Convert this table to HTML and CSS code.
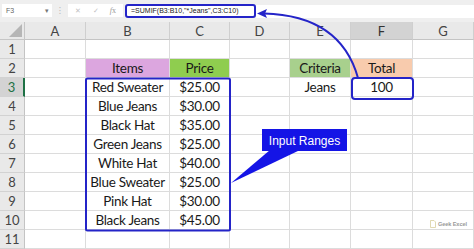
FILE: index.html
```html
<!DOCTYPE html>
<html>
<head>
<meta charset="utf-8">
<link rel="stylesheet" href="styles.css">
</head>
<body>
<div class="page">
  <div class="fbar">
    <div class="namebox"><span class="nb-text">F3</span><span class="nb-arrow">▾</span></div>
    <div class="sep">⁝</div>
    <div class="btns"><span class="b-x">✕</span><span class="b-ok">✓</span><span class="b-fx"><i>f</i>x</span></div>
    <div class="formula">=SUMIF(B3:B10,"*Jeans",C3:C10)</div>
    <div class="frest"></div>
  </div>
  <div class="sheet">
    <div class="corner"><span class="tri"></span></div>
    <div class="ch">A</div><div class="ch">B</div><div class="ch">C</div><div class="ch">D</div><div class="ch">E</div><div class="ch sel">F</div><div class="ch">G</div>

    <div class="rh">1</div><div class="c"></div><div class="c"></div><div class="c"></div><div class="c"></div><div class="c"></div><div class="c"></div><div class="c"></div>
    <div class="rh">2</div><div class="c"></div><div class="c items">Items</div><div class="c price">Price</div><div class="c"></div><div class="c crit">Criteria</div><div class="c total">Total</div><div class="c"></div>
    <div class="rh sel">3</div><div class="c"></div><div class="c">Red Sweater</div><div class="c">$25.00</div><div class="c"></div><div class="c">Jeans</div><div class="c">100</div><div class="c"></div>
    <div class="rh">4</div><div class="c"></div><div class="c">Blue Jeans</div><div class="c">$30.00</div><div class="c"></div><div class="c"></div><div class="c"></div><div class="c"></div>
    <div class="rh">5</div><div class="c"></div><div class="c">Black Hat</div><div class="c">$35.00</div><div class="c"></div><div class="c"></div><div class="c"></div><div class="c"></div>
    <div class="rh">6</div><div class="c"></div><div class="c">Green Jeans</div><div class="c">$25.00</div><div class="c"></div><div class="c"></div><div class="c"></div><div class="c"></div>
    <div class="rh">7</div><div class="c"></div><div class="c">White Hat</div><div class="c">$40.00</div><div class="c"></div><div class="c"></div><div class="c"></div><div class="c"></div>
    <div class="rh">8</div><div class="c"></div><div class="c">Blue Sweater</div><div class="c">$25.00</div><div class="c"></div><div class="c"></div><div class="c"></div><div class="c"></div>
    <div class="rh">9</div><div class="c"></div><div class="c">Pink Hat</div><div class="c">$30.00</div><div class="c"></div><div class="c"></div><div class="c"></div><div class="c"></div>
    <div class="rh">10</div><div class="c"></div><div class="c">Black Jeans</div><div class="c">$45.00</div><div class="c"></div><div class="c"></div><div class="c"></div><div class="c"></div>
    <div class="rh">11</div><div class="c"></div><div class="c"></div><div class="c"></div><div class="c"></div><div class="c"></div><div class="c"></div><div class="c"></div>
  </div>

  <svg class="overlay" width="474" height="249" viewBox="0 0 474 249">
    <rect x="86" y="78.5" width="144" height="152" rx="1.5" fill="none" stroke="#2424c8" stroke-width="2"/>
    <rect x="352" y="78" width="61" height="21" rx="3" fill="none" stroke="#2424c8" stroke-width="2"/>
    <path d="M358 78 C 348 42, 322 15, 264 13.5" fill="none" stroke="#2424c8" stroke-width="2"/>
    <polygon points="257,13.5 267,9 265,13.5 267,18" fill="#2424c8"/>
    <polygon points="270,150 300,150 231,183" fill="#1414e6"/>
    <rect x="262" y="129" width="85" height="22" fill="#1414e6"/>
    <text x="304.5" y="144.5" text-anchor="middle" class="callout-text">Input Ranges</text>
  </svg>

  <div class="wm">
    <svg class="wm-icon" width="6" height="8" viewBox="0 0 6 8"><path d="M0.5 0.5 H4 L5.5 2 V7.5 H0.5 Z" fill="#fff" stroke="#d8cfa0" stroke-width="0.8"/></svg>
    <span>Geek Excel</span>
  </div>
</div>
</body>
</html>
```

FILE: styles.css
```css
* { box-sizing: border-box; }
html, body { margin: 0; padding: 0; background: #fff; }
.page {
  position: relative;
  width: 474px;
  height: 249px;
  overflow: hidden;
  font-family: Lato, "Noto Sans", sans-serif;
}
.fbar {
  height: 22px;
  background: #efefef;
  display: flex;
  align-items: flex-start;
  padding-top: 4px;
}
.namebox {
  margin-left: 2px;
  width: 50px;
  height: 13px;
  background: #fff;
  display: flex;
  align-items: center;
  justify-content: space-between;
  padding: 0 3px 0 4px;
  font-family: "Liberation Sans", sans-serif;
  font-size: 7px;
  color: #666;
}
.nb-arrow { font-size: 7px; color: #777; }
.sep {
  width: 16px;
  height: 13px;
  text-align: center;
  font-size: 9px;
  line-height: 13px;
  color: #b5b5b5;
}
.btns {
  width: 55px;
  height: 13px;
  background: #fff;
  display: flex;
  align-items: center;
  font-family: "DejaVu Sans", sans-serif;
  font-size: 7px;
  color: #c2c2c2;
}
.b-x { margin-left: 7px; }
.b-ok { margin-left: 12px; }
.b-fx { margin-left: 11px; font-family: "Liberation Serif", serif; font-size: 8px; color: #9a9a9a; }
.formula {
  margin-left: 2px;
  width: 131px;
  height: 14px;
  border: 2px solid #2424c8;
  border-radius: 3px;
  background: #fff;
  padding-left: 4px;
  font-family: "Liberation Sans", sans-serif;
  font-size: 7px;
  line-height: 10px;
  color: #222;
  white-space: nowrap;
}
.frest {
  flex: 1;
  height: 13px;
  margin-top: 1px;
  background: #fff;
}
.sheet {
  display: grid;
  grid-template-columns: 25px 61px 84px 60px 60px 61px 62px 61px;
  grid-template-rows: 18px repeat(11, 19px);
}
.corner {
  background: #e9e9e9;
  border-right: 1px solid #c6c6c6;
  border-bottom: 1px solid #c6c6c6;
  position: relative;
}
.tri {
  position: absolute;
  right: 2px;
  bottom: 2px;
  width: 0;
  height: 0;
  border-left: 13px solid transparent;
  border-bottom: 13px solid #b6b6b6;
}
.ch {
  background: #e9e9e9;
  border-right: 1px solid #cfcfcf;
  border-bottom: 1px solid #c4c4c4;
  display: flex;
  align-items: center;
  justify-content: center;
  font-size: 13px;
  color: #444;
}
.ch.sel { background: #d3d3d3; color: #333; }
.rh {
  background: #e9e9e9;
  border-right: 1px solid #c4c4c4;
  border-bottom: 1px solid #d2d2d2;
  display: flex;
  align-items: center;
  justify-content: center;
  font-size: 13px;
  color: #444;
}
.rh.sel { background: #d3d3d3; color: #1e7145; border-right: 2px solid #1e7145; }
.c {
  border-right: 1px solid #dcdcdc;
  border-bottom: 1px solid #dcdcdc;
  display: flex;
  align-items: center;
  justify-content: center;
  font-size: 13.5px;
  letter-spacing: -0.3px;
  color: #1a1a1a;
  white-space: nowrap;
}
.items { background: #dca6df; }
.price { background: #8fcd4f; }
.crit { background: #a8d08d; }
.total { background: #f8cbad; }
.overlay {
  position: absolute;
  left: 0;
  top: 0;
  pointer-events: none;
}
.callout-text {
  font-family: "Liberation Sans", sans-serif;
  font-size: 12px;
  fill: #fff;
}
.wm {
  position: absolute;
  left: 430px;
  top: 220px;
  display: flex;
  align-items: center;
  gap: 2px;
  font-family: "Liberation Sans", sans-serif;
  font-size: 5.6px;
  font-weight: bold;
  letter-spacing: -0.1px;
  color: #9a9a9a;
  white-space: nowrap;
}
.wm-icon { display: block; }
```
